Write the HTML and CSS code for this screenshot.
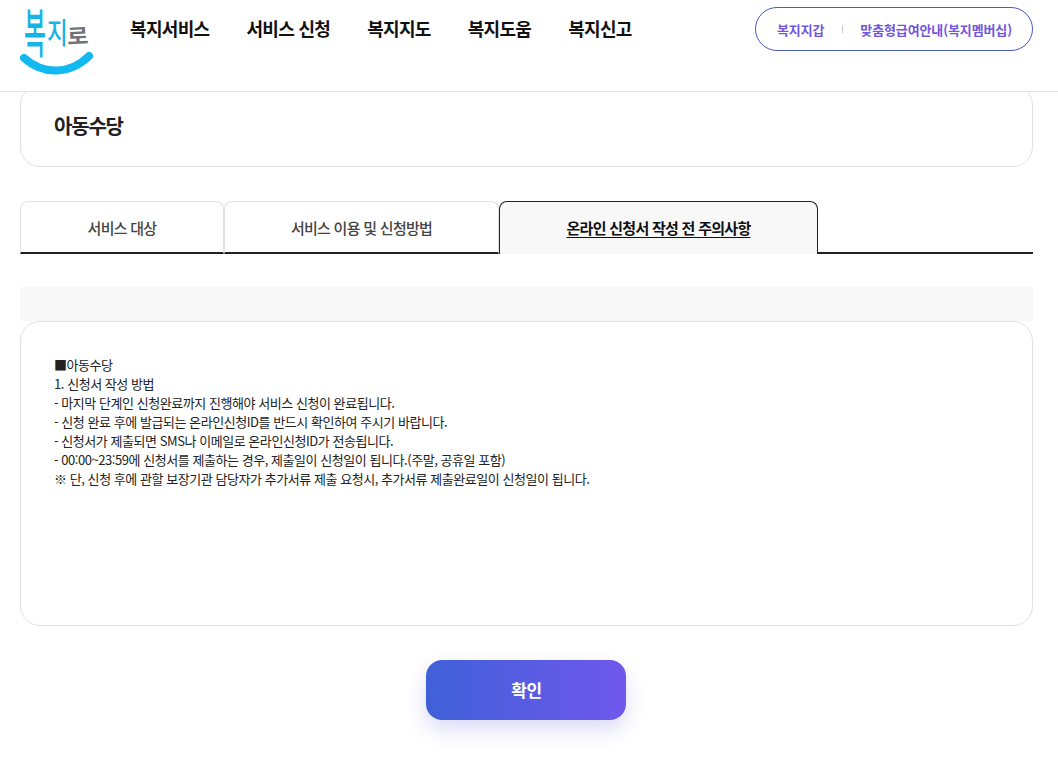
FILE: index.html
```html
<!DOCTYPE html>
<html lang="ko">
<head>
<meta charset="utf-8">
<title>아동수당</title>
<link rel="stylesheet" href="styles.css">
</head>
<body>
<header class="site-header">
  <a class="logo" href="#">
    <svg class="logo-mark" viewBox="0 0 80 80" width="80" height="80" aria-label="복지로">
      <text class="logo-a" transform="translate(8 53) scale(.82 1.85)">복</text>
      <text class="logo-a" transform="translate(31 44) scale(.78 1)">지</text>
      <text class="logo-b" transform="translate(51.5 44.5) rotate(-3) scale(.8 .74)">로</text>
      <path class="logo-smile" d="M8 58 C27 75 54 75 73 56"/>
    </svg>
  </a>
  <nav class="main-nav">
    <a href="#">복지서비스</a>
    <a href="#">서비스 신청</a>
    <a href="#">복지지도</a>
    <a href="#">복지도움</a>
    <a href="#">복지신고</a>
  </nav>
  <div class="util-pill">
    <a href="#">복지지갑</a>
    <span class="util-sep"></span>
    <a href="#">맞춤형급여안내(복지멤버십)</a>
  </div>
</header>
<main class="content">
  <section class="title-card"><h1>아동수당</h1></section>
  <ul class="tabs">
    <li class="tab tab-1"><a href="#">서비스 대상</a></li>
    <li class="tab tab-2"><a href="#">서비스 이용 및 신청방법</a></li>
    <li class="tab tab-3 active"><a href="#">온라인 신청서 작성 전 주의사항</a></li>
  </ul>
  <section class="panel">
    <div class="notice">
      <p>■아동수당</p>
      <p>1. 신청서 작성 방법</p>
      <p>- 마지막 단계인 신청완료까지 진행해야 서비스 신청이 완료됩니다.</p>
      <p>- 신청 완료 후에 발급되는 온라인신청ID를 반드시 확인하여 주시기 바랍니다.</p>
      <p>- 신청서가 제출되면 SMS나 이메일로 온라인신청ID가 전송됩니다.</p>
      <p>- 00:00~23:59에 신청서를 제출하는 경우, 제출일이 신청일이 됩니다.(주말, 공휴일 포함)</p>
      <p>※ 단, 신청 후에 관할 보장기관 담당자가 추가서류 제출 요청시, 추가서류 제출완료일이 신청일이 됩니다.</p>
    </div>
  </section>
  <div class="actions"><button class="confirm" type="button">확인</button></div>
</main>
</body>
</html>
```
FILE: styles.css
```css
* { box-sizing: border-box; }
html, body { margin: 0; padding: 0; }
body {
  background: #fff;
  color: #111;
  font-family: "Noto Sans CJK KR", "Noto Sans", sans-serif;
}
a { color: inherit; text-decoration: none; }

.site-header {
  position: relative;
  z-index: 2;
  display: flex;
  align-items: flex-start;
  height: 92px;
  padding: 0 25px 0 16px;
  background: #fff;
  border-bottom: 1px solid #e2e2e2;
}
.logo { display: block; width: 114px; flex: none; }
.logo-mark { display: block; }
.logo-a, .logo-b { font-size: 29px; font-weight: 500; }
.logo-a { fill: #16b4e6; }
.logo-b { fill: #6f7378; font-weight: 700; }
.logo-smile { fill: none; stroke: #10b9f0; stroke-width: 8; stroke-linecap: round; }

.main-nav {
  display: flex;
  gap: 37px;
  padding-top: 14px;
  font-size: 18px;
  font-weight: 700;
  line-height: 28px;
  letter-spacing: -0.68px;
  color: #111;
}
.util-pill {
  display: flex;
  align-items: center;
  justify-content: space-between;
  width: 278px;
  height: 44px;
  margin: 7px 0 0 auto;
  padding: 0 20px 0 21px;
  border: 1px solid #4a59c4;
  border-radius: 22px;
  color: #7356dc;
  font-size: 13px;
  font-weight: 700;
  letter-spacing: -0.12px;
}
.util-sep { width: 1px; height: 8px; background: #c9c9c9; }

.content { padding: 0 25px 43px 20px; }

.title-card {
  display: flex;
  align-items: center;
  height: 82px;
  margin-top: -7px;
  padding: 0 33px 1px;
  border: 1px solid #e2e2e2;
  border-radius: 20px;
}
.title-card h1 {
  margin: 0;
  font-size: 20px;
  font-weight: 700;
  letter-spacing: -1.2px;
  color: #222;
}

.tabs {
  display: flex;
  height: 53px;
  margin: 34px 0 0;
  padding: 0;
  list-style: none;
  border-bottom: 2px solid #222;
}
.tab {
  height: 53px;
  background: #fff;
  border: 1px solid #e2e2e2;
  border-bottom: 0;
  border-radius: 8px 8px 0 0;
  font-size: 15px;
  font-weight: 500;
  letter-spacing: -0.72px;
  color: #444;
}
.tab a {
  display: flex;
  align-items: center;
  justify-content: center;
  height: 51px;
}
.tab-1, .tab-2 { border-bottom: 2px solid #222; }
.tab-1 { width: 204px; }
.tab-2 { width: 275px; }
.tab-3 { width: 319px; }
.tab.active {
  background: #f8f8f8;
  border: 1px solid #222;
  border-bottom: 0;
  color: #111;
  font-weight: 700;
}
.tab.active a { text-decoration: underline; text-underline-offset: 3px; }

.panel {
  margin-top: 33px;
  padding-top: 34px;
  background: linear-gradient(#f8f8f8 34px, #fff 34px);
}
.notice {
  height: 305px;
  padding: 33px 33px 0;
  background: #fff;
  border: 1px solid #e2e2e2;
  border-radius: 20px;
  font-size: 13px;
  line-height: 19px;
  letter-spacing: -0.45px;
  color: #222;
}
.notice p { margin: 0; }

.actions { display: flex; justify-content: center; margin-top: 34px; padding-right: 1px; }
.confirm {
  width: 200px;
  height: 60px;
  padding: 0 0 2px 1px;
  border: 0;
  border-radius: 16px;
  background: linear-gradient(90deg, #3f60d8, #7058ec);
  box-shadow: 0 10px 20px rgba(80, 80, 220, 0.2);
  color: #fff;
  font-family: inherit;
  font-size: 17px;
  font-weight: 700;
  letter-spacing: -0.3px;
}
```
